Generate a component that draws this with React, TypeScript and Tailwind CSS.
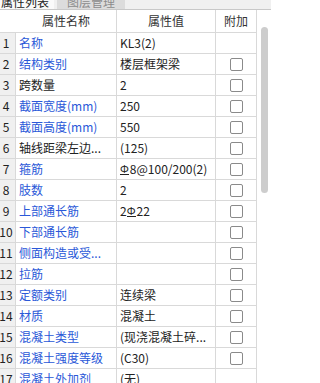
import React from "react";

type Row = {
  name: string;
  blue: boolean;
  value: React.ReactNode;
  check: boolean;
};

const Rebar = () => (
  <span className="inline-block leading-none border-b border-[#222] mr-[1px] text-[11px] align-baseline">Φ</span>
);

const rows: Row[] = [
  { name: "名称", blue: true, value: "KL3(2)", check: false },
  { name: "结构类别", blue: true, value: "楼层框架梁", check: true },
  { name: "跨数量", blue: false, value: "2", check: true },
  { name: "截面宽度(mm)", blue: true, value: "250", check: true },
  { name: "截面高度(mm)", blue: true, value: "550", check: true },
  { name: "轴线距梁左边...", blue: false, value: "(125)", check: true },
  {
    name: "箍筋",
    blue: true,
    value: (
      <>
        <Rebar />8@100/200(2)
      </>
    ),
    check: true,
  },
  { name: "肢数", blue: true, value: "2", check: true },
  {
    name: "上部通长筋",
    blue: true,
    value: (
      <>
        2<Rebar />22
      </>
    ),
    check: true,
  },
  { name: "下部通长筋", blue: true, value: "", check: true },
  { name: "侧面构造或受...", blue: true, value: "", check: true },
  { name: "拉筋", blue: true, value: "", check: true },
  { name: "定额类别", blue: true, value: "连续梁", check: true },
  { name: "材质", blue: true, value: "混凝土", check: true },
  { name: "混凝土类型", blue: true, value: "(现浇混凝土碎...", check: true },
  { name: "混凝土强度等级", blue: true, value: "(C30)", check: true },
  { name: "混凝土外加剂", blue: true, value: "(无)", check: false },
];

export default function App() {
  return (
    <div
      className="w-[271px] h-[383px] overflow-hidden bg-white text-[12px] text-[#1f1f1f]"
      style={{ fontFamily: '"Noto Sans CJK SC", "Microsoft YaHei", sans-serif' }}
    >
      {/* tab bar */}
      <div className="h-[10px] bg-[#f0f0f0] border-b border-[#c8c8c8] flex overflow-hidden">
        <div className="w-[54px] bg-[#fafafa] overflow-hidden">
          <div className="-mt-[4px] leading-[12px] text-[12px] pl-[1px] text-[#222]">属性列表</div>
        </div>
        <div className="w-[3px]" />
        <div className="w-[68px] bg-[#dcdcdc] overflow-hidden">
          <div className="-mt-[4px] leading-[12px] text-[12px] text-center text-[#8c8c8c]">图层管理</div>
        </div>
      </div>

      <div className="flex">
        <div className="w-[257px]">
          {/* header */}
          <div className="grid grid-cols-[16px_101px_99px_41px] h-[23px] border-b border-[#d9d9d9]">
            <div />
            <div className="border-r border-[#d9d9d9] flex items-center justify-center text-[#333]">
              属性名称
            </div>
            <div className="border-r border-[#d9d9d9] flex items-center justify-center text-[#333]">
              属性值
            </div>
            <div className="border-r border-[#d9d9d9] flex items-center justify-center text-[#333]">
              附加
            </div>
          </div>
          {rows.map((r, i) => (
            <div
              key={i}
              className="grid grid-cols-[16px_101px_99px_41px] h-[21px] border-b border-[#d9d9d9]"
            >
              <div className="bg-[#f0f0f0] border-r border-[#d9d9d9] flex items-center justify-center pr-[3px] text-[#222] overflow-hidden">
                {i + 1}
              </div>
              <div
                className={
                  "border-r border-[#d9d9d9] flex items-center pl-[3px] whitespace-nowrap overflow-hidden " +
                  (r.blue ? "text-[#2a58d8]" : "text-[#222]")
                }
              >
                {r.name}
              </div>
              <div className="border-r border-[#d9d9d9] flex items-center pl-[3px] whitespace-nowrap overflow-hidden text-[#222]">
                {r.value}
              </div>
              <div className="border-r border-[#d9d9d9] flex items-center justify-center">
                {r.check && (
                  <div className="w-[13px] h-[13px] border border-[#8a8a8a] rounded-[2px] bg-white" />
                )}
              </div>
            </div>
          ))}
        </div>
        <div className="w-[14px] pt-[17px] flex justify-center pl-[1px]">
          <div className="w-[7px] h-[166px] rounded-full bg-[#cdcdcd]" />
        </div>
      </div>
    </div>
  );
}
